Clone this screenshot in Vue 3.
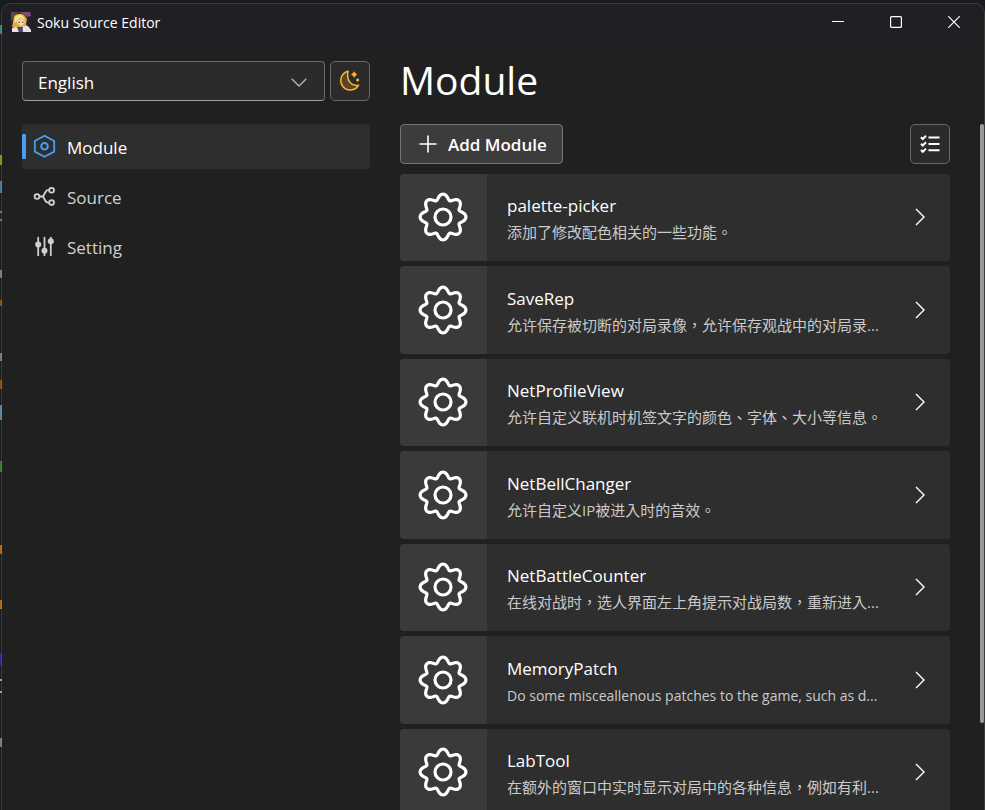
<script setup>
import { ref } from 'vue'

const language = ref('English')
const current = ref('Module')
const pages = ['Module', 'Source', 'Setting']

const modules = [
  { name: 'palette-picker', lang: 'zh', text: '添加了修改配色相关的一些功能。' },
  { name: 'SaveRep', lang: 'zh', text: '允许保存被切断的对局录像，允许保存观战中的对局录...' },
  { name: 'NetProfileView', lang: 'zh', text: '允许自定义联机时机签文字的颜色、字体、大小等信息。' },
  { name: 'NetBellChanger', lang: 'zh', text: '允许自定义IP被进入时的音效。' },
  { name: 'NetBattleCounter', lang: 'zh', text: '在线对战时，选人界面左上角提示对战局数，重新进入...' },
  { name: 'MemoryPatch', lang: 'en', text: 'Do some misceallenous patches to the game, such as d...' },
  { name: 'LabTool', lang: 'zh', text: '在额外的窗口中实时显示对局中的各种信息，例如有利...' },
]

// Eight-lobed gear outline around the centre of a 50x50 box; the angle is
// skewed so that the lobes are rounder than a plain sine wave
const gear = 'M' + Array.from({ length: 192 }, (_, i) => {
  const t = (i / 192) * Math.PI * 2
  const r = 20.2 + 2.7 * Math.cos(8 * t)
  const a = t + 0.022 * Math.sin(8 * t)
  return `${(25 + r * Math.cos(a)).toFixed(2)} ${(25 + r * Math.sin(a)).toFixed(2)}`
}).join('L') + 'Z'
</script>

<template>
  <div class="desktop">
    <div class="window">
      <header class="titlebar">
        <svg class="app-icon" viewBox="0 0 20 20" aria-hidden="true">
          <rect width="20" height="20" fill="#2a2128" />
          <path d="M0 0h8L3 4 1 9 0 10z" fill="#5d4258" />
          <path d="M8 0h11l1 4-4 1-4-3z" fill="#7d4a80" />
          <path d="M3 4Q8 0 13 3L16 7 15 12 17 16 12 15 6 17 1 15 2 10Z" fill="#dcae3e" />
          <path d="M4 5Q8 1 12 4L14 8 9 6 5 10 3 11Z" fill="#f6e08c" />
          <path d="M6 9L10 7 14 9 13 12 10 14 7 12Z" fill="#f5d9bd" />
          <path d="M7.5 9.5h1.5v1.5H7.5zM11 9.5h1.5v1.5H11z" fill="#8a5a35" />
          <path d="M12 14L17 14 20 18V20H11ZM1 16L6 15 8 20H1Z" fill="#e6e2e9" />
          <path d="M6 15L11 15 12 20H8Z" fill="#4f4962" />
        </svg>
        <span class="app-name">Soku Source Editor</span>
        <div class="controls">
          <button aria-label="Minimize"><svg viewBox="0 0 12 12"><path d="M0 5.5h12" /></svg></button>
          <button aria-label="Maximize"><svg viewBox="0 0 12 12"><rect x=".6" y=".6" width="10.8" height="10.8" rx="1" /></svg></button>
          <button aria-label="Close"><svg viewBox="0 0 12 12"><path d="M.3.3l11.4 11.4M11.7.3L.3 11.7" /></svg></button>
        </div>
      </header>

      <div class="content">
        <aside class="sidebar">
          <div class="options">
            <div class="select">
              <select v-model="language" aria-label="Language">
                <option>English</option>
              </select>
              <svg class="chevron" viewBox="0 0 16 9" aria-hidden="true"><path d="M.7.7L8 8 15.3.7" /></svg>
            </div>
            <button class="square" aria-label="Dark theme">
              <svg class="moon" viewBox="0 0 22 22" aria-hidden="true">
                <path d="M9.2 1.3A9.5 9.5 0 1 0 19.6 15.2Q14.4 16.2 11.2 12.7Q7.3 8.2 9.2 1.3Z" fill="#5a4626" stroke="#fdb52d" stroke-width="1.5" stroke-linejoin="round" />
                <path d="M15.2 1.8Q15.7 4 17.8 4.5Q15.7 5 15.2 7.2Q14.7 5 12.6 4.5Q14.7 4 15.2 1.8Z" fill="#fdb52d" stroke="#fdb52d" />
                <circle cx="18.6" cy="10" r="1.5" fill="#fdb52d" />
              </svg>
            </button>
          </div>
          <nav class="nav">
            <a v-for="page in pages" :key="page" href="#" :class="{ active: current === page }" @click.prevent="current = page">
              <svg v-if="page === 'Module'" viewBox="0 0 24 24" aria-hidden="true">
                <path d="M12.5 .8L22.2 6V16.6L12.5 21.8 2.8 16.6V6Z" stroke-width="1.8" stroke-linejoin="round" />
                <circle cx="12.5" cy="11.3" r="3.3" stroke-width="2" />
              </svg>
              <svg v-else-if="page === 'Source'" viewBox="0 0 24 24" aria-hidden="true">
                <circle cx="5" cy="11.5" r="2.4" /><circle cx="19.6" cy="5.2" r="2.4" /><circle cx="19.6" cy="17.6" r="2.4" />
                <path d="M7.4 11.5H11M17.2 5.2H16Q14.4 5.2 13.5 7L11 11.5 13.5 16Q14.4 17.6 16 17.6H17.2" />
              </svg>
              <svg v-else viewBox="0 0 24 24" aria-hidden="true">
                <path d="M6.2 2.7v17.6M12.5 2.7v17.6M18.8 2.7v17.6" stroke-linecap="round" />
                <g class="knobs"><circle cx="6.2" cy="9.5" r="3" /><circle cx="12.5" cy="15.7" r="3" /><circle cx="18.8" cy="6.3" r="3" /></g>
              </svg>
              <span>{{ page }}</span>
            </a>
          </nav>
        </aside>

        <main class="main">
          <h1>{{ current }}</h1>
          <div class="toolbar">
            <button class="add">
              <svg viewBox="0 0 18 18" aria-hidden="true"><path d="M9 .5v17M.5 9h17" /></svg>
              <span>Add Module</span>
            </button>
            <button class="square" aria-label="Select modules">
              <svg class="checks" viewBox="0 0 20 20" aria-hidden="true">
                <path d="M8.5 3.5h11M8.5 10h11M8.5 16.3h11" />
                <path d="M1 3.2l1.8 1.8L6 1.8M1 9.7l1.8 1.8L6 8.3M1 16l1.8 1.8L6 14.6" />
              </svg>
            </button>
          </div>
          <ul class="list">
            <li v-for="item in modules" :key="item.name">
              <button class="card">
                <span class="thumb">
                  <svg viewBox="0 0 50 50" aria-hidden="true"><path :d="gear" /><circle cx="25" cy="25" r="8" /></svg>
                </span>
                <span class="info">
                  <span class="name">{{ item.name }}</span>
                  <span class="text" :class="item.lang">{{ item.text }}</span>
                </span>
                <svg class="arrow" viewBox="0 0 10 18" aria-hidden="true"><path d="M1 1l8 8-8 8" /></svg>
              </button>
            </li>
          </ul>
        </main>
      </div>
      <div class="scrollbar"></div>
    </div>
  </div>
</template>

<style>
body {
  background: #191a1b;
}
</style>

<style scoped>
* {
  box-sizing: border-box;
}

.desktop {
  height: 100vh;
  padding: 3px 0 0 1px;
  overflow: hidden;
  color: #fff;
  font-family: "Open Sans", "Noto Sans CJK TC", sans-serif;
  background: linear-gradient(
    #191a1b 25px, #2f8a6b 25px 34px, #191a1b 34px 155px,
    #7a9a20 155px 165px, #191a1b 165px 181px, #4a7898 181px 193px, #191a1b 193px 211px,
    #77777f 211px 213px, #191a1b 213px 219px, #77777f 219px 221px, #191a1b 221px 270px,
    #8a7a60 270px 278px, #191a1b 278px 300px, #82500f 300px 306px, #191a1b 306px 353px,
    #77777f 353px 361px, #191a1b 361px 380px,
    #82500f 380px 389px, #191a1b 389px 405px, #56829f 405px 420px, #191a1b 420px 461px,
    #288220 461px 472px, #191a1b 472px 545px, #b0650f 545px 554px, #191a1b 554px 600px,
    #b0650f 600px 609px, #191a1b 609px 653px, #26269a 653px 665px, #191a1b 665px 679px,
    #a0a0a0 679px 681px, #191a1b 681px 691px, #a0a0a0 691px 693px, #191a1b 693px 738px,
    #77777f 738px 747px, #191a1b 747px
  );
}

button,
select {
  margin: 0;
  padding: 0;
  border: 0;
  color: inherit;
  font: inherit;
  background: none;
}

svg {
  display: block;
  flex: none;
  fill: none;
  stroke: currentColor;
}

.window {
  position: relative;
  height: 100%;
  overflow: hidden;
  border: 1px solid #3c3c3c;
  border-left-color: rgba(160, 160, 160, 0.25);
  border-bottom: 0;
  border-radius: 10px 10px 0 0;
  background: #202020;
  background-clip: padding-box;
}

.titlebar {
  display: flex;
  align-items: center;
  height: 37px;
  padding: 0 1px 1px 9px;
  background: #202024;
}

.app-icon {
  width: 20px;
  height: 20px;
  stroke: none;
}

.app-name {
  margin-left: 6px;
  font-size: 14px;
}

.controls {
  display: flex;
  height: 100%;
  margin-left: auto;
}

.controls button {
  display: grid;
  place-items: center;
  width: 58px;
}

.controls svg {
  width: 12px;
  height: 12px;
  stroke-width: 1.2;
}

.content {
  display: grid;
  grid-template-columns: 348px minmax(0, 1fr);
  column-gap: 30px;
  padding: 12px 34px 0 20px;
}

.sidebar {
  padding-top: 8px;
}

.options {
  display: flex;
  gap: 5px;
}

.select {
  position: relative;
  flex: 1;
}

.select select {
  width: 100%;
  height: 40px;
  padding: 2px 40px 0 15px;
  border: 1px solid #696969;
  border-bottom-color: #9e9e9e;
  border-radius: 4px;
  appearance: none;
  background: #2b2b2b;
  font-size: 17px;
}

.chevron {
  position: absolute;
  top: 17px;
  right: 18px;
  width: 16px;
  height: 9px;
  color: #b5b5b5;
  stroke-width: 1.3;
  pointer-events: none;
}

.square {
  display: grid;
  place-items: center;
  width: 40px;
  height: 40px;
  border: 1px solid #696969;
  border-radius: 5px;
  background: #2b2b2b;
}

.moon {
  width: 22px;
  height: 22px;
  stroke: none;
}

.checks {
  width: 20px;
  height: 20px;
  stroke-width: 2;
}

.nav {
  display: grid;
  gap: 5px;
  margin-top: 23px;
}

.nav a {
  position: relative;
  display: flex;
  align-items: center;
  gap: 11px;
  height: 45px;
  padding-left: 10px;
  border-radius: 4px;
  color: #d0d0d0;
  font-size: 17px;
  text-decoration: none;
}

.nav a.active {
  color: #fff;
  background: #2e2e2e;
}

.nav a.active::before {
  content: "";
  position: absolute;
  left: 0;
  top: 10px;
  width: 4px;
  height: 25px;
  border-radius: 1px;
  background: #479ef5;
}

.nav svg {
  width: 24px;
  height: 24px;
  stroke-width: 1.8;
}

.nav span {
  padding-top: 2px;
}

.nav .active svg {
  color: #479ef5;
}

.knobs {
  fill: currentColor;
  stroke: none;
}

h1 {
  margin: 0;
  font-size: 39px;
  font-weight: 400;
  line-height: 54px;
}

.toolbar {
  display: flex;
  justify-content: space-between;
  margin-top: 17px;
}

.add {
  display: flex;
  align-items: center;
  gap: 11px;
  height: 40px;
  padding: 0 15px 0 18px;
  border: 1px solid #757575;
  border-radius: 4px;
  background: #3c3c3c;
  font-size: 17px;
  font-weight: 600;
}

.add svg {
  width: 18px;
  height: 18px;
  stroke-width: 1.6;
}

.list {
  display: grid;
  gap: 5px;
  margin: 10px 0 0;
  padding: 0;
  list-style: none;
}

.card {
  display: flex;
  align-items: center;
  width: 100%;
  height: 87px;
  padding: 0 25px 1px 0;
  overflow: hidden;
  border-radius: 4px;
  background: linear-gradient(90deg, #3a3a3a 87px, #2e2e2e 87px);
  text-align: left;
}

li:nth-child(even) .card {
  height: 88px;
}

.thumb {
  display: grid;
  place-items: center;
  width: 87px;
  height: 100%;
  padding-right: 1px;
}

.thumb svg {
  width: 50px;
  height: 50px;
  stroke-width: 3.2;
}

.info {
  display: grid;
  flex: 1;
  min-width: 0;
  padding: 4px 30px 0 20px;
}

.name {
  font-size: 17px;
  line-height: 27px;
}

.text {
  overflow: hidden;
  color: #cacaca;
  font-size: 15px;
  line-height: 27px;
  text-overflow: ellipsis;
  white-space: nowrap;
}

.text.en {
  font-size: 14px;
}

.arrow {
  width: 10px;
  height: 18px;
  stroke-width: 1.4;
}

.scrollbar {
  position: absolute;
  top: 120px;
  right: 0;
  width: 4px;
  height: 599px;
  border-radius: 2px;
  background: #9a9a9a;
}
</style>
